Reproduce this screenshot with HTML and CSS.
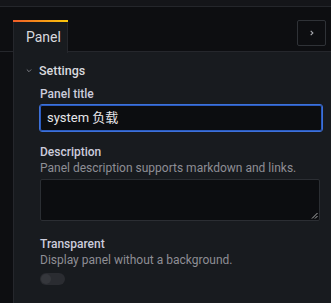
FILE: index.html
```html
<!DOCTYPE html>
<html>
<head>
<meta charset="utf-8">
<link rel="stylesheet" href="styles.css">
</head>
<body>
<div class="topstrip"></div>
<div class="tabs-row">
  <div class="tab">Panel</div>
  <button class="collapse-btn" aria-label="collapse">
    <svg width="8" height="8" viewBox="0 0 8 8"><path d="M2.7 1.8 L4.9 4 L2.7 6.2" fill="none" stroke="#a9aab0" stroke-width="1.1"/></svg>
  </button>
</div>
<div class="content">
  <div class="section-head">
    <svg class="chev" width="8" height="6" viewBox="0 0 8 6"><path d="M1.8 1.5 L4 3.7 L6.2 1.5" fill="none" stroke="#7b7d84" stroke-width="1"/></svg>
    <span>Settings</span>
  </div>
  <div class="field">
    <div class="label">Panel title</div>
    <div class="input focused">system 负载</div>
  </div>
  <div class="field">
    <div class="label">Description</div>
    <div class="help">Panel description supports markdown and links.</div>
    <div class="textarea">
      <svg class="grip" width="7" height="7" viewBox="0 0 7 7"><path d="M6.5 1 L1 6.5 M6.5 4 L4 6.5" stroke="#c0c0c0" stroke-width="0.9"/></svg>
    </div>
  </div>
  <div class="field">
    <div class="label">Transparent</div>
    <div class="help">Display panel without a background.</div>
    <div class="switch"><div class="knob"></div></div>
  </div>
</div>
</body>
</html>
```
FILE: styles.css
```css
html, body {
  margin: 0;
  padding: 0;
  background: #0d0e11;
  font-family: Roboto, "Noto Sans CJK SC", sans-serif;
  color: #ccccdc;
  height: 303px;
  overflow: hidden;
}
.topstrip {
  height: 6px;
  background: #141519;
  border-bottom: 1px solid #24262b;
}
.tabs-row {
  display: flex;
  align-items: flex-start;
  height: 45px;
  padding: 13px 5px 0 13px;
  box-sizing: border-box;
  border-bottom: 1px solid #25272c;
}
.tab {
  width: 55px;
  height: 33px;
  box-sizing: border-box;
  margin-bottom: -1px;
  background: #181b1f;
  border-top: 2px solid transparent;
  border-image: linear-gradient(90deg, #f05a28, #fbca0a) 1;
  border-image-width: 2px 0 0 0;
  color: #d8d9de;
  font-size: 14px;
  padding: 7px 0 0 13px;
  position: relative;
}
.tab::after {
  content: "";
  position: absolute;
  left: 0;
  right: 0;
  bottom: 0;
  top: 0;
  border-left: 1px solid #25272c;
  border-right: 1px solid #25272c;
  pointer-events: none;
}
.collapse-btn {
  margin-left: auto;
  width: 29px;
  height: 26px;
  background: transparent;
  border: 1px solid #2f3237;
  border-radius: 2px;
  padding: 0;
  display: flex;
  align-items: center;
  justify-content: center;
}
.content {
  margin-left: 13px;
  border-left: 1px solid #25272c;
  background: #181b1f;
  height: 260px;
  padding: 0 9px 0 26px;
}
.section-head {
  display: flex;
  align-items: flex-start;
  height: 34px;
  margin-left: -15px;
  padding-top: 11px;
  box-sizing: border-box;
  font-size: 12.5px;
  font-weight: 500;
  line-height: 16px;
  color: #d8d9de;
}
.chev {
  margin: 5px 6px 0 0;
}
.field {
  margin-bottom: 13px;
}
.field + .field {
  margin-bottom: 15px;
}
.label {
  font-size: 12px;
  font-weight: 500;
  color: #ccccdc;
  line-height: 16px;
}
.help {
  font-size: 12px;
  color: #8e8e95;
  line-height: 16px;
  margin-bottom: 3px;
}
.help + .switch {
  margin-top: 5px;
}
.input {
  margin-top: 3px;
  height: 26px;
  box-sizing: border-box;
  background: #0c0d10;
  border: 1px solid #2b5bbf;
  outline: 1px solid #3d71d9;
  border-radius: 2px;
  font-size: 13px;
  color: #e6e6ea;
  padding: 4px 6px;
  line-height: 16px;
}
.textarea {
  height: 42px;
  box-sizing: border-box;
  background: #0c0d10;
  border: 1px solid #2b2e33;
  border-radius: 2px;
  position: relative;
  margin-right: 2px;
}
.grip {
  position: absolute;
  right: 1px;
  bottom: 1px;
}
.switch {
  width: 25px;
  height: 12px;
  border-radius: 6px;
  background: #2a2c31;
  position: relative;
}
.knob {
  position: absolute;
  left: 1px;
  top: 1px;
  width: 10px;
  height: 10px;
  border-radius: 50%;
  background: #35373c;
}
```
